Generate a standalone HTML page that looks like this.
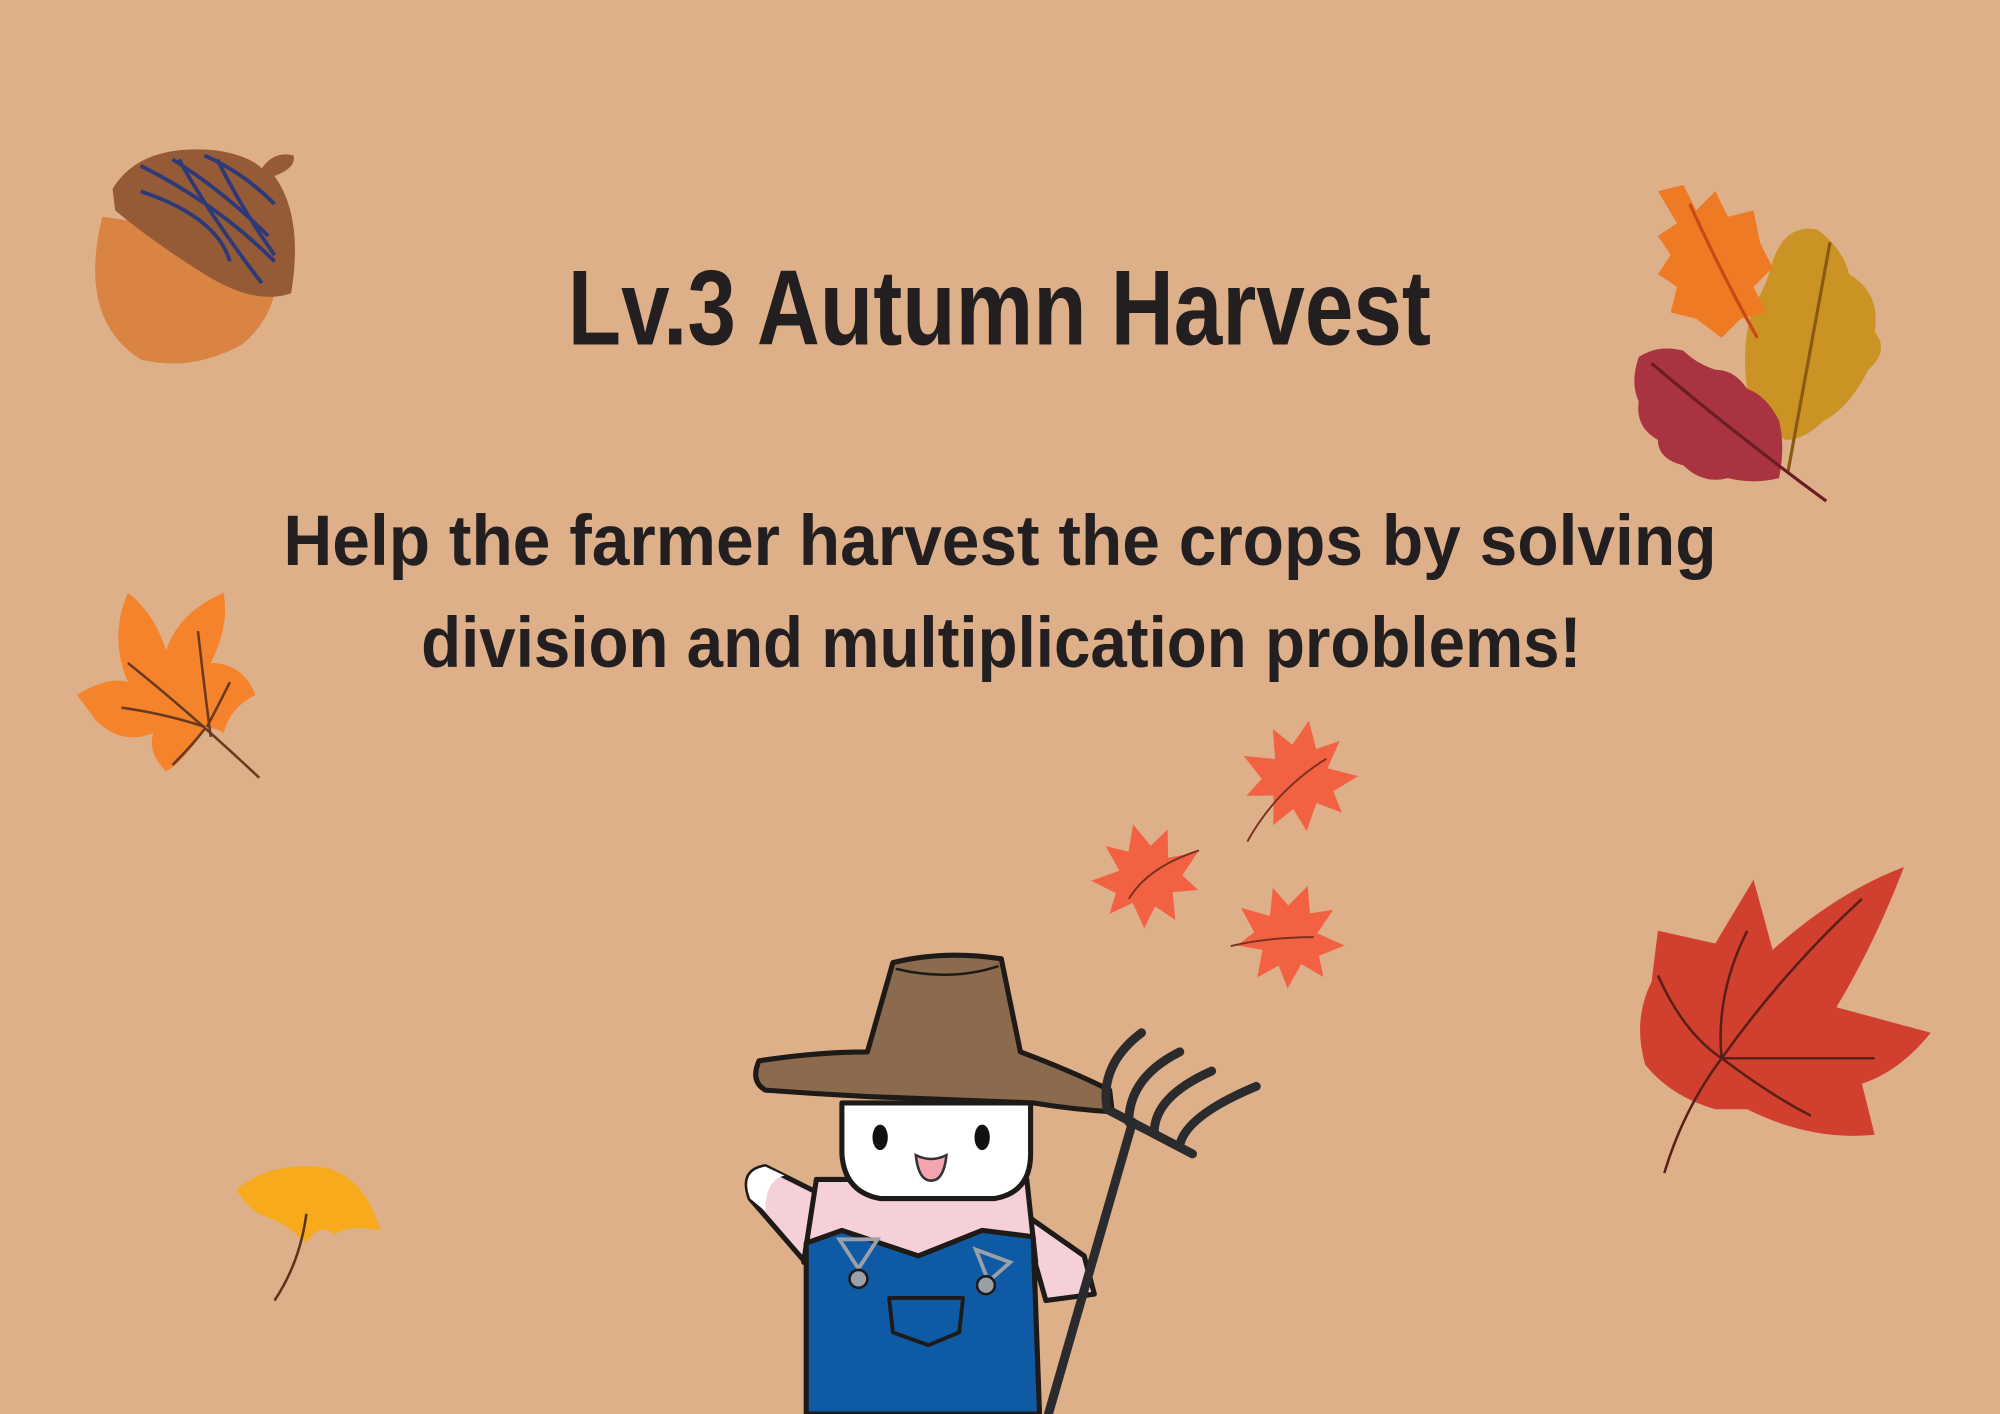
<!DOCTYPE html>
<html><head><meta charset="utf-8"><style>
html,body{margin:0;padding:0;background:#DDB08A;}
svg{display:block;}
</style></head><body>
<svg width="2000" height="1414" viewBox="0 0 1568 1109" xmlns="http://www.w3.org/2000/svg">
<rect width="1568" height="1109" fill="#DDB08A"/>
<defs>
<path id="maple" d="M0,-50 L10,-28 L28,-38 L22,-14 L48,-12 L30,4 L40,20 L18,16 L14,40 L0,24 L-14,40 L-18,16 L-40,20 L-30,4 L-48,-12 L-22,-14 L-28,-38 L-10,-28 Z"/>
</defs>
<!-- Title -->
<text x="445" y="270" font-family="Liberation Sans, sans-serif" font-weight="bold" font-size="84" fill="#231F20" textLength="677" lengthAdjust="spacingAndGlyphs">Lv.3 Autumn Harvest</text>
<text x="222" y="443" font-family="Liberation Sans, sans-serif" font-weight="bold" font-size="56" fill="#231F20" textLength="1124" lengthAdjust="spacingAndGlyphs">Help the farmer harvest the crops by solving</text>
<text x="330" y="523" font-family="Liberation Sans, sans-serif" font-weight="bold" font-size="56" fill="#231F20" textLength="910" lengthAdjust="spacingAndGlyphs">division and multiplication problems!</text>

<!-- Acorn -->
<g>
<path d="M80,170 Q60,250 110,282 Q150,292 190,270 Q225,240 215,190 Z" fill="#D98443"/>
<path d="M88,148 Q110,112 170,118 Q195,122 205,132 Q215,118 230,122 Q232,132 215,138 Q238,170 228,230 Q200,240 160,215 Q120,190 90,165 Z" fill="#955A36"/>
<g stroke="#2E3A78" stroke-width="3" fill="none">
<path d="M110,130 Q170,160 215,205"/><path d="M135,125 Q175,150 210,185"/><path d="M160,122 Q190,135 215,160"/>
<path d="M140,125 Q165,170 205,222"/><path d="M110,150 Q170,170 180,205"/><path d="M170,125 Q190,165 215,200"/>
</g>
</g>

<!-- Orange leaf left -->
<g>
<path d="M60,545 Q85,530 100,535 Q85,500 100,465 Q120,480 130,510 Q140,480 175,465 Q180,490 165,520 Q190,520 200,545 Q180,555 175,575 Q160,565 155,580 Q140,600 130,605 Q115,590 120,575 Q95,585 75,565 Z" fill="#F4832C"/>
<g stroke="#6B3A1E" stroke-width="2" fill="none"><path d="M100,520 Q150,560 203,610"/><path d="M155,495 Q160,540 165,578"/><path d="M95,555 Q130,560 160,570"/><path d="M135,600 Q150,585 160,572"/><path d="M180,535 Q170,555 162,570"/></g>
</g>

<!-- Ginkgo -->
<g>
<path d="M185,933 Q210,912 250,915 Q285,920 298,965 Q275,960 262,968 Q250,958 240,975 Q225,960 210,955 Q195,950 185,933 Z" fill="#F6AA1C"/>
<path d="M240,952 Q235,990 215,1020" stroke="#5A3418" stroke-width="2" fill="none"/>
</g>

<!-- Top right cluster -->
<g>
<path d="M1390,205 Q1400,175 1425,180 Q1445,195 1450,215 Q1475,230 1470,260 Q1482,275 1465,290 Q1450,320 1430,330 Q1415,345 1400,345 Q1375,330 1370,305 Q1365,270 1375,240 Q1385,225 1390,205 Z" fill="#C8911F" opacity="0.95"/>
<path d="M1435,190 Q1420,270 1402,370" stroke="#8A5A12" stroke-width="2.5" fill="none"/>
<path d="M1300,150 L1320,145 L1330,165 L1345,150 L1355,170 L1375,165 L1380,190 L1390,210 L1375,225 L1385,245 L1365,250 L1350,265 L1330,250 L1310,245 L1315,225 L1300,215 L1310,200 L1300,185 L1315,175 Z" fill="#EE7A24"/>
<path d="M1325,160 Q1350,215 1378,265" stroke="#C94814" stroke-width="2.5" fill="none"/>
<path d="M1285,280 Q1300,270 1320,275 Q1330,285 1345,290 Q1360,290 1370,305 Q1385,310 1395,330 Q1400,350 1395,375 Q1375,380 1355,375 Q1335,380 1320,365 Q1300,360 1300,345 Q1282,335 1285,315 Q1278,300 1285,280 Z" fill="#A93341"/>
<path d="M1295,285 Q1360,340 1432,393" stroke="#6B1C25" stroke-width="2.5" fill="none"/>
</g>

<!-- Big red maple -->
<g>
<path d="M1345,740 L1375,690 L1390,745 Q1440,700 1493,680 Q1470,740 1440,790 L1514,810 Q1490,840 1460,850 L1470,890 Q1420,895 1370,870 L1345,870 Q1310,860 1290,835 Q1280,800 1295,770 L1300,730 Z" fill="#D13F2F"/>
<g stroke="#5A1F18" stroke-width="2" fill="none">
<path d="M1460,705 Q1400,760 1350,830 Q1320,870 1305,920"/>
<path d="M1370,730 Q1345,780 1350,830"/><path d="M1300,765 Q1320,810 1350,830"/>
<path d="M1350,830 Q1400,830 1470,830"/><path d="M1350,830 Q1390,860 1420,875"/>
</g>
</g>

<!-- Small maples -->
<g fill="#F26242">
<use href="#maple" transform="translate(1018,612) scale(0.95) rotate(10)"/>
<use href="#maple" transform="translate(900,690) scale(0.9) rotate(-15)"/>
<use href="#maple" transform="translate(1010,737) scale(0.9) rotate(20)"/>
</g>
<g stroke="#7A3020" stroke-width="1.5" fill="none">
<path d="M1040,595 Q1000,620 978,660"/><path d="M940,667 Q900,680 885,705"/><path d="M1030,735 Q995,735 965,742"/>
</g>

<!-- Farmer -->
<g stroke="#1E1A18" stroke-width="4" stroke-linejoin="round" stroke-linecap="round">
<!-- arm left -->
<path d="M640,935 L600,915 Q580,918 588,940 L640,1000 Z" fill="#F6D0D8"/>
<path d="M600,915 Q580,918 588,940 L600,950 Q600,925 615,922 Z" fill="#fff" stroke="none"/>
<!-- arm right -->
<path d="M800,950 L850,985 L858,1015 L820,1020 Z" fill="#F6D0D8"/>
<!-- shirt -->
<path d="M640,925 L805,925 L812,990 L630,990 Z" fill="#F6D0D8"/>
<!-- overalls -->
<path d="M632,975 L660,965 L720,985 L770,965 L810,970 L815,1109 L632,1109 Z" fill="#0F5AA4"/>
<!-- face -->
<path d="M660,865 L660,905 Q662,935 690,940 L780,940 Q808,935 808,905 L808,865 Z" fill="#fff"/>
<!-- hat -->
<path d="M700,755 Q740,745 785,752 L800,825 Q840,840 870,855 L872,872 Q840,870 810,865 L680,860 Q640,858 600,855 Q588,848 595,832 Q640,825 680,825 Z" fill="#8C6A4E"/>
<path d="M703,760 Q745,770 782,758" fill="none" stroke-width="2"/>
<!-- pocket -->
<path d="M697,1018 L755,1018 L752,1045 L728,1055 L700,1045 Z" fill="#0F5AA4" stroke-width="3"/>
</g>
<g stroke="#9AA0A8" stroke-width="3" fill="none"><path d="M658,972 L688,972 L673,995 Z"/><path d="M765,980 L792,990 L775,1005 Z"/></g>
<circle cx="673" cy="1003" r="7" fill="#9AA0A8" stroke="#1E1A18" stroke-width="2"/>
<circle cx="773" cy="1008" r="7" fill="#9AA0A8" stroke="#1E1A18" stroke-width="2"/>
<ellipse cx="690" cy="892" rx="6" ry="10" fill="#111"/>
<ellipse cx="770" cy="892" rx="6" ry="10" fill="#111"/>
<path d="M718,906 Q730,912 742,906 Q740,926 730,926 Q720,926 718,906 Z" fill="#F4A5B0" stroke="#333" stroke-width="2"/>
<!-- pitchfork -->
<g stroke="#2B2B2D" stroke-width="7" fill="none" stroke-linecap="round">
<path d="M822,1109 L888,880"/>
<path d="M868,870 L935,905"/>
<path d="M868,870 Q862,835 895,810"/>
<path d="M885,880 Q885,845 925,825"/>
<path d="M905,888 Q905,860 950,840"/>
<path d="M925,898 Q930,875 985,852"/>
</g>
</svg>
</body></html>
